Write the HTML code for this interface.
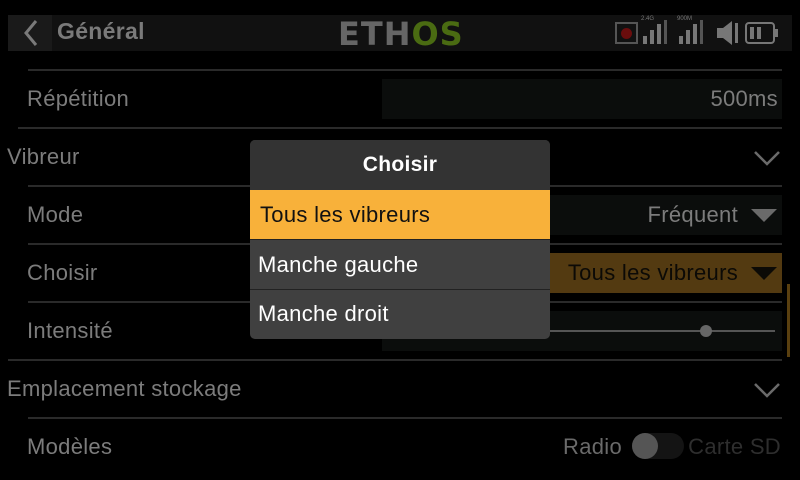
<!DOCTYPE html>
<html><head><meta charset="utf-8"><style>
*{margin:0;padding:0;box-sizing:border-box}
body{width:800px;height:480px;background:#000;position:relative;overflow:hidden;font-family:"Liberation Sans","DejaVu Sans",sans-serif;color:#7f7f7f}
.a{position:absolute}
.line{position:absolute;left:28px;right:18px;height:2px;background:#2a2a2a}
.lbl{position:absolute;font-size:22px;letter-spacing:0.3px;color:#7c7c7c;white-space:nowrap}
.box{position:absolute;background:#0b0d0c}
.tri{position:absolute;width:0;height:0;border-left:13px solid transparent;border-right:13px solid transparent;border-top:13px solid #6a6a6a}
.pop div{font-size:22px;letter-spacing:0.3px}
</style></head><body>
<div class="a" style="left:8px;top:15px;width:784px;height:36px;background:#111"></div>
<div class="a" style="left:8px;top:15px;width:44px;height:36px;background:#1a1a1a"></div>
<svg class="a" style="left:20px;top:18px" width="24" height="30"><path d="M16 3 L6 15 L16 27" stroke="#7a7a7a" stroke-width="3" fill="none"/></svg>
<div class="a" style="left:57px;top:18px;font-size:23px;letter-spacing:0.3px;font-weight:bold;color:#7a7a7a">Général</div>
<div class="a" style="left:338px;top:15px;font-size:32px;font-weight:bold;letter-spacing:1px;color:#666;font-family:'DejaVu Sans',sans-serif">ETH<span style="color:#4a6b12">OS</span></div>
<div class="a" style="left:615px;top:22px;width:23px;height:22px;border:2px solid #555"></div>
<div class="a" style="left:621px;top:28px;width:11px;height:11px;border-radius:50%;background:#6a0d0d"></div>
<div class="a" style="left:641px;top:16px;font-size:6px;color:#777">2.4G</div>
<div class="a" style="left:643px;top:36px;width:4px;height:8px;background:#777"></div>
<div class="a" style="left:650px;top:30px;width:4px;height:14px;background:#777"></div>
<div class="a" style="left:657px;top:24px;width:4px;height:20px;background:#777"></div>
<div class="a" style="left:664px;top:20px;width:3px;height:24px;background:#555"></div>
<div class="a" style="left:677px;top:16px;font-size:6px;color:#777">900M</div>
<div class="a" style="left:679px;top:36px;width:4px;height:8px;background:#777"></div>
<div class="a" style="left:686px;top:30px;width:4px;height:14px;background:#777"></div>
<div class="a" style="left:693px;top:24px;width:4px;height:20px;background:#777"></div>
<div class="a" style="left:700px;top:20px;width:3px;height:24px;background:#555"></div>
<svg class="a" style="left:716px;top:20px" width="26" height="26"><path d="M1 8h6l9-7v24l-9-7H1z" fill="#777"/><rect x="19" y="3" width="3" height="20" fill="#777"/></svg>
<div class="a" style="left:745px;top:22px;width:30px;height:22px;border:2px solid #777;border-radius:4px"></div>
<div class="a" style="left:775px;top:29px;width:3px;height:8px;background:#777"></div>
<div class="a" style="left:750px;top:27px;width:4px;height:12px;background:#777"></div>
<div class="a" style="left:757px;top:27px;width:4px;height:12px;background:#777"></div>

<div class="line" style="top:69px"></div>
<div class="lbl" style="left:27px;top:86px">Répétition</div>
<div class="box" style="left:382px;top:79px;width:400px;height:40px"></div>
<div class="lbl" style="right:22px;top:86px">500ms</div>
<div class="line" style="top:127px;left:18px"></div>
<div class="lbl" style="left:7px;top:144px">Vibreur</div>
<svg class="a" style="left:753px;top:150px" width="28" height="16"><path d="M2 2l12 12 12-12" stroke="#6a6a6a" stroke-width="2.5" fill="none"/></svg>
<div class="line" style="top:185px"></div>
<div class="lbl" style="left:27px;top:202px">Mode</div>
<div class="box" style="left:382px;top:195px;width:400px;height:40px"></div>
<div class="lbl" style="right:62px;top:202px">Fréquent</div>
<div class="tri" style="left:751px;top:209px"></div>
<div class="line" style="top:243px"></div>
<div class="lbl" style="left:27px;top:260px">Choisir</div>
<div class="box" style="left:382px;top:253px;width:400px;height:40px;background:#533a11"></div>
<div class="lbl" style="right:62px;top:260px;color:#0c0a06">Tous les vibreurs</div>
<div class="tri" style="left:751px;top:267px;border-top-color:#0c0a06"></div>
<div class="line" style="top:301px"></div>
<div class="lbl" style="left:27px;top:318px">Intensité</div>
<div class="box" style="left:382px;top:311px;width:400px;height:40px"></div>
<div class="a" style="left:395px;top:330px;width:380px;height:2px;background:#555"></div>
<div class="a" style="left:700px;top:325px;width:12px;height:12px;border-radius:50%;background:#666"></div>
<div class="a" style="left:787px;top:284px;width:3px;height:73px;background:#5a4010"></div>
<div class="line" style="top:359px;left:8px"></div>
<div class="lbl" style="left:7px;top:376px">Emplacement stockage</div>
<svg class="a" style="left:753px;top:382px" width="28" height="16"><path d="M2 2l12 12 12-12" stroke="#6a6a6a" stroke-width="2.5" fill="none"/></svg>
<div class="line" style="top:417px"></div>
<div class="lbl" style="left:27px;top:434px">Modèles</div>
<div class="lbl" style="right:178px;top:434px;color:#6a6a6a">Radio</div>
<div class="a" style="left:632px;top:433px;width:52px;height:26px;border-radius:13px;background:#141414"></div>
<div class="a" style="left:632px;top:433px;width:26px;height:26px;border-radius:50%;background:#555"></div>
<div class="lbl" style="right:19px;top:434px;color:#2e2e2e">Carte SD</div>

<div class="a pop" style="left:250px;top:140px;width:300px;height:199px;background:#404040;border-radius:5px;overflow:hidden">
 <div style="height:50px;background:#333;color:#fff;font-weight:bold;font-size:21px;text-align:center;line-height:50px">Choisir</div>
 <div style="height:50px;background:#f8b13a;color:#111;line-height:50px;padding-left:10px;border-bottom:1px solid #222">Tous les vibreurs</div>
 <div style="height:50px;color:#fff;line-height:50px;padding-left:8px;border-bottom:1px solid #222">Manche gauche</div>
 <div style="height:49px;color:#fff;line-height:48px;padding-left:8px">Manche droit</div>
</div>
</body></html>
